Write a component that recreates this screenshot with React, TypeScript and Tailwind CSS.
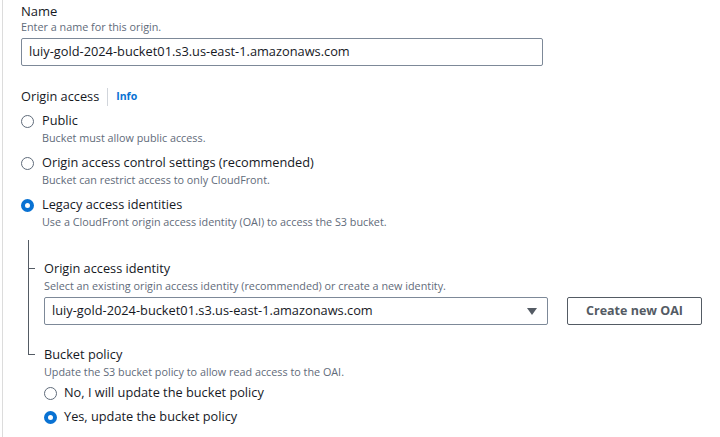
import React from "react";

function Radio({ checked }: { checked?: boolean }) {
  return checked ? (
    <span className="w-[13px] h-[13px] rounded-full border-[4px] border-[#0972d3] bg-white shrink-0 box-border" />
  ) : (
    <span className="w-[13px] h-[13px] rounded-full border border-[#5f6b7a] bg-white shrink-0 box-border" />
  );
}

function Option({ label, desc, checked }: { label: string; desc: string; checked?: boolean }) {
  return (
    <div className="flex flex-col">
      <div className="flex items-center h-[20px]">
        <Radio checked={checked} />
        <span className="ml-[8px] text-[12.75px] text-[#16191f]">{label}</span>
      </div>
      <div className="pl-[21px] text-[10.8px] text-[#5f6b7a] leading-[14px]">{desc}</div>
    </div>
  );
}

export default function App() {
  return (
    <div
      className="w-[720px] h-[437px] bg-white overflow-hidden relative"
      style={{ fontFamily: '"Open Sans", "Noto Sans", sans-serif' }}
    >
      <div className="absolute left-[2px] top-0 bottom-0 w-[1px] bg-[#dcdcdc]" />
      <div className="pl-[21px] pt-[2px] flex flex-col">
        <div className="text-[13px] text-[#16191f] leading-[18px]">Name</div>
        <div className="text-[10.8px] text-[#5f6b7a] leading-[14px]">Enter a name for this origin.</div>
        <div className="mt-[4px] w-[522px] h-[28px] border border-[#7d8998] rounded-[2px] flex items-center pl-[7px] text-[12.8px] text-[#16191f]">
          luiy-gold-2024-bucket01.s3.us-east-1.amazonaws.com
        </div>

        <div className="mt-[21px] flex items-center h-[20px]">
          <span className="text-[12.75px] text-[#16191f]">Origin access</span>
          <span className="mx-[8px] w-[1px] h-[18px] bg-[#d1d5db]" />
          <span className="text-[10.5px] font-bold text-[#0972d3]">Info</span>
        </div>

        <div className="mt-[4px] flex flex-col gap-[8px]">
          <Option label="Public" desc="Bucket must allow public access." />
          <Option label="Origin access control settings (recommended)" desc="Bucket can restrict access to only CloudFront." />
          <Option label="Legacy access identities" desc="Use a CloudFront origin access identity (OAI) to access the S3 bucket." checked />
        </div>

        <div className="flex mt-[11px]">
          <div className="relative w-[23px] shrink-0">
            <div className="absolute left-[7px] top-0 h-[115px] w-[1px] bg-[#545b64]" />
            <div className="absolute left-[7px] top-[28px] w-[7px] h-[1px] bg-[#545b64]" />
            <div className="absolute left-[7px] top-[114px] w-[7px] h-[1px] bg-[#545b64]" />
          </div>
          <div className="flex flex-col pt-[19px]">
            <div className="text-[12.75px] text-[#16191f] leading-[18px]">Origin access identity</div>
            <div className="text-[10.8px] text-[#5f6b7a] leading-[14px] mt-[2px]">
              Select an existing origin access identity (recommended) or create a new identity.
            </div>
            <div className="flex items-center mt-[4px]">
              <div className="w-[504px] h-[28px] border border-[#7d8998] rounded-[2px] flex items-center pl-[7px] pr-[10px] text-[12.8px] text-[#16191f]">
                <span className="flex-1">luiy-gold-2024-bucket01.s3.us-east-1.amazonaws.com</span>
                <svg width="10" height="7" viewBox="0 0 10 7">
                  <path d="M0 0 L10 0 L5 7 Z" fill="#545b64" />
                </svg>
              </div>
              <div className="ml-[19px] w-[135px] h-[28px] border border-[#545b64] rounded-[2px] flex items-center justify-center text-[12.5px] font-bold text-[#545b64]">
                Create new OAI
              </div>
            </div>

            <div className="mt-[20px] text-[12.75px] text-[#16191f] leading-[18px]">Bucket policy</div>
            <div className="text-[10.8px] text-[#5f6b7a] leading-[14px] mt-[2px]">
              Update the S3 bucket policy to allow read access to the OAI.
            </div>
            <div className="flex flex-col gap-[4px] mt-[4px]">
              <div className="flex items-center h-[20px]">
                <Radio />
                <span className="ml-[7px] text-[12.75px] text-[#16191f]">No, I will update the bucket policy</span>
              </div>
              <div className="flex items-center h-[20px]">
                <Radio checked />
                <span className="ml-[7px] text-[12.75px] text-[#16191f]">Yes, update the bucket policy</span>
              </div>
            </div>
          </div>
        </div>
      </div>
    </div>
  );
}
